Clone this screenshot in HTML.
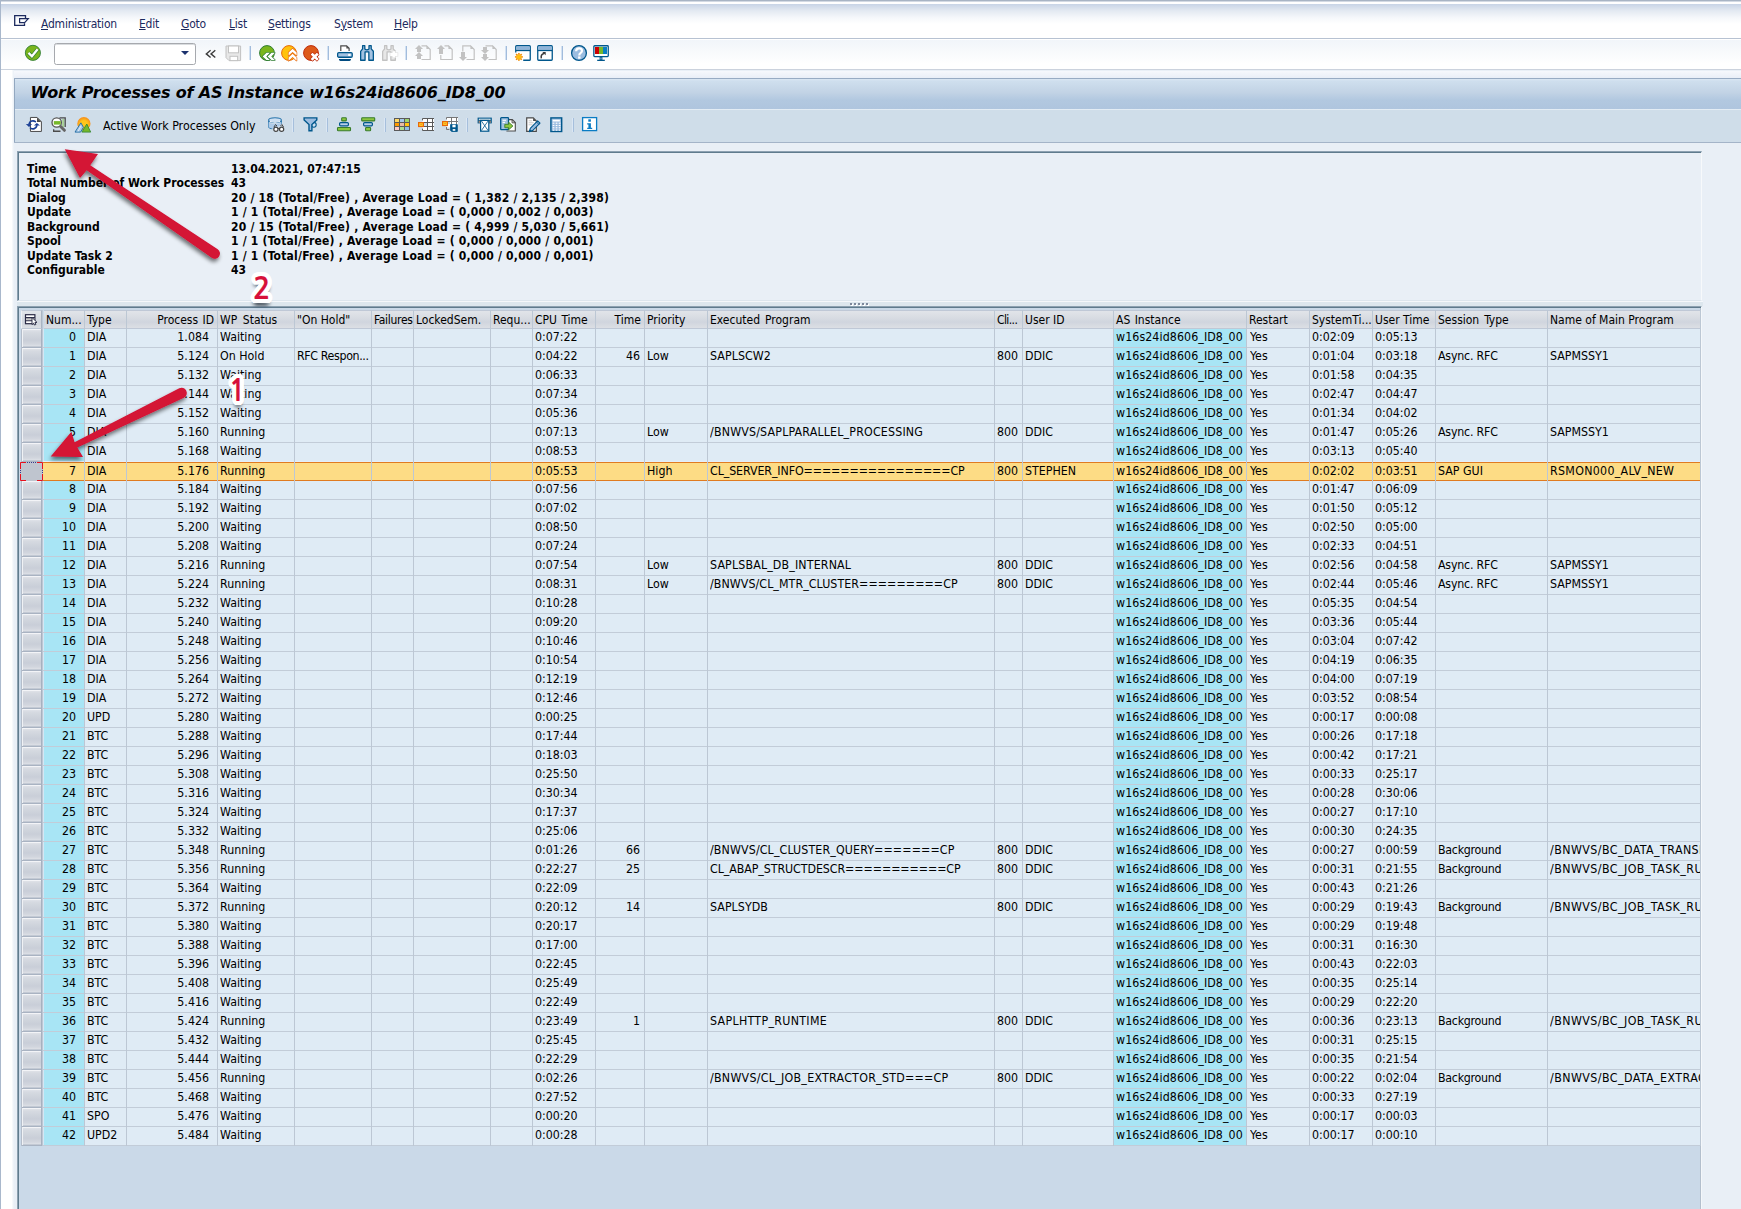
<!DOCTYPE html><html><head><meta charset="utf-8"><title>Work Processes of AS Instance w16s24id8606_ID8_00</title><style>
*{box-sizing:border-box;margin:0;padding:0}
html,body{width:1741px;height:1209px;overflow:hidden;background:#e9eff6;font-family:"DejaVu Sans Condensed","DejaVu Sans","Liberation Sans",sans-serif;font-size:12px;font-stretch:condensed;color:#000}
.a{position:absolute}
.t{position:absolute;white-space:pre;line-height:19px;height:19px;overflow:hidden;margin-top:-1px;font-size:12.3px}
.r{text-align:right}
#menu span{position:absolute;top:17px;line-height:15px;color:#1c2a5e;white-space:pre;letter-spacing:-0.22px}
#menu u{text-decoration:underline;text-decoration-thickness:1px;text-underline-offset:0.6px}
.sep{position:absolute;width:2px;background:linear-gradient(90deg,#d3e2f3 0,#d3e2f3 1px,#a2bcdc 1px,#a2bcdc 2px)}
.ic{position:absolute;overflow:visible}
.h{position:absolute;top:310px;height:19px;border-top:1px solid #bfc8d6;border-bottom:1px solid #bfc8d6;background:linear-gradient(#e1e4e9 0%,#d9dde3 35%,#d0d5de 65%,#dcdfe4 100%);line-height:17px;white-space:pre;overflow:hidden;padding:1px 3px 0 2px}
.vl{position:absolute;top:310px;width:1px;height:836px;background:#bcc7d4}
.ib{position:absolute;left:27px;font-weight:bold;line-height:15px;white-space:pre}
.iv{position:absolute;left:231px;font-weight:bold;line-height:15px;white-space:pre;letter-spacing:0.21px}
.dg{position:absolute;font-family:'NanumGothic','IPAGothic','Liberation Sans',sans-serif;font-weight:bold;font-stretch:normal;font-size:29px;-webkit-text-stroke:0.15px #d7103a;line-height:40px;height:40px;color:#d7103a;white-space:pre;text-shadow:4.10px 0.00px 0 #fff,3.96px 1.06px 0 #fff,3.55px 2.05px 0 #fff,2.90px 2.90px 0 #fff,2.05px 3.55px 0 #fff,1.06px 3.96px 0 #fff,0.00px 4.10px 0 #fff,-1.06px 3.96px 0 #fff,-2.05px 3.55px 0 #fff,-2.90px 2.90px 0 #fff,-3.55px 2.05px 0 #fff,-3.96px 1.06px 0 #fff,-4.10px 0.00px 0 #fff,-3.96px -1.06px 0 #fff,-3.55px -2.05px 0 #fff,-2.90px -2.90px 0 #fff,-2.05px -3.55px 0 #fff,-1.06px -3.96px 0 #fff,-0.00px -4.10px 0 #fff,1.06px -3.96px 0 #fff,2.05px -3.55px 0 #fff,2.90px -2.90px 0 #fff,3.55px -2.05px 0 #fff,3.96px -1.06px 0 #fff,3.00px 0.00px 0 #fff,2.77px 1.15px 0 #fff,2.12px 2.12px 0 #fff,1.15px 2.77px 0 #fff,0.00px 3.00px 0 #fff,-1.15px 2.77px 0 #fff,-2.12px 2.12px 0 #fff,-2.77px 1.15px 0 #fff,-3.00px 0.00px 0 #fff,-2.77px -1.15px 0 #fff,-2.12px -2.12px 0 #fff,-1.15px -2.77px 0 #fff,-0.00px -3.00px 0 #fff,1.15px -2.77px 0 #fff,2.12px -2.12px 0 #fff,2.77px -1.15px 0 #fff,1.80px 0.00px 0 #fff,1.46px 1.06px 0 #fff,0.56px 1.71px 0 #fff,-0.56px 1.71px 0 #fff,-1.46px 1.06px 0 #fff,-1.80px 0.00px 0 #fff,-1.46px -1.06px 0 #fff,-0.56px -1.71px 0 #fff,0.56px -1.71px 0 #fff,1.46px -1.06px 0 #fff,0 7px 3px rgba(40,50,60,.5),-2.5px 6px 3px rgba(40,50,60,.4),2.5px 6px 3px rgba(40,50,60,.4)}
</style></head><body>
<div class="a" style="left:0;top:0;width:1741px;height:70px;background:#fff"></div>
<div class="a" style="left:0;top:0;width:1741px;height:1px;background:#a8b4c4"></div>
<div class="a" style="left:0;top:1px;width:1741px;height:1px;background:#d3dae4"></div>
<div class="a" style="left:0;top:4px;width:1741px;height:20px;background:linear-gradient(#c8d4e6,#e4eaf2 35%,#f6f8fb 70%,#fff)"></div>
<div class="a" style="left:0;top:38px;width:1741px;height:1px;background:#b7c2d2"></div>
<div class="a" style="left:0;top:40px;width:1741px;height:24px;background:linear-gradient(#f1f5fa,#f8fafc 50%,#fff)"></div>
<div class="a" style="left:0;top:69px;width:1741px;height:1px;background:#cbd2dd"></div>
<div class="a" style="left:0;top:71px;width:1741px;height:7px;background:linear-gradient(#f6f8fc,#e9eef7)"></div>
<div class="a" style="left:0;top:70px;width:14px;height:1139px;background:linear-gradient(90deg,#fff 0,#fff 11.5px,#e9eff6 14px)"></div>
<div class="a" style="left:0;top:0;width:1px;height:1209px;background:#a9b8cc"></div>
<div id="menu">
<svg class="ic" style="left:13px;top:14px" width="18" height="14" viewBox="0 0 18 14" ><path d="M12.5 4V1.7H1.7V11.3H11.5V9.3" fill="none" stroke="#1c2a5e" stroke-width="1.3"/><path d="M6.6 4.6H15.3L11.6 8.6H6.6Z" fill="none" stroke="#1c2a5e" stroke-width="1.2" stroke-linejoin="miter"/></svg>
<span style="left:41px"><u>A</u>dministration</span>
<span style="left:139px"><u>E</u>dit</span>
<span style="left:181px"><u>G</u>oto</span>
<span style="left:229px"><u>L</u>ist</span>
<span style="left:268px"><u>S</u>ettings</span>
<span style="left:334px">S<u>y</u>stem</span>
<span style="left:394px"><u>H</u>elp</span>
</div>
<div class="a" style="left:54px;top:43px;width:142px;height:22px;background:#fff;border:1px solid #a6a9ae;border-radius:2.5px;box-shadow:inset 0 1px 0 #d9dcdf"></div>
<div class="a" style="left:180.5px;top:51.3px;width:0;height:0;border-left:4.3px solid transparent;border-right:4.3px solid transparent;border-top:4.6px solid #1c326e"></div>
<svg class="ic" style="left:24px;top:44px" width="18" height="18" viewBox="0 0 18 18" ><circle cx="8.9" cy="8.85" r="7.55" fill="#7ab51d" stroke="#2f7d32" stroke-width="0.9"/><path d="M4.5 8.9L7.9 12.3L13.6 5.3" fill="none" stroke="#2f7d32" stroke-width="3.7" stroke-linejoin="miter"/><path d="M4.5 8.9L7.9 12.3L13.6 5.3" fill="none" stroke="#fff" stroke-width="2.3" stroke-linejoin="miter"/></svg><svg class="ic" style="left:205px;top:49px" width="12" height="10" viewBox="0 0 12 10" ><path d="M5.6 1.3L1.3 4.9L5.6 8.5M10.3 1.3L6 4.9L10.3 8.5" fill="none" stroke="#3c3c3c" stroke-width="1.4"/></svg><svg class="ic" style="left:224.5px;top:44.5px" width="17" height="17" viewBox="0 0 17 17" ><path d="M1 1H15.6V15.6H4L1 12.6Z" fill="#e7e7e7" stroke="#c2c2c2" stroke-width="1"/><rect x="3.5" y="1" width="10" height="6.8" fill="#fff" stroke="#c2c2c2"/><rect x="5" y="11.3" width="7.6" height="4.3" fill="#fff" stroke="#c2c2c2"/></svg><svg class="ic" style="left:258px;top:44px" width="18" height="18" viewBox="0 0 18 18" ><circle cx="9" cy="9" r="7.4" fill="#7ab51d" stroke="#2f7d32" stroke-width="1"/><g fill="#fff" stroke="#2f7d32" stroke-width="1.3" paint-order="stroke" stroke-linejoin="round"><path d="M4.6 12.4L8.5 8.8H11.9L8.3 12.4L11.9 16H8.5Z"/><path d="M9.6 12.4L13.5 8.8H16.9L13.3 12.4L16.9 16H13.5Z"/></g></svg><svg class="ic" style="left:280px;top:44px" width="18" height="18" viewBox="0 0 18 18" ><circle cx="9" cy="9" r="7.4" fill="#ffc20e" stroke="#e8690b" stroke-width="1"/><g fill="#fff" stroke="#e8690b" stroke-width="1.3" paint-order="stroke" stroke-linejoin="round"><path d="M12.6 4.7L16.6 8.5V11.6L12.6 8L8.6 11.6V8.5Z"/><path d="M12.6 9.8L16.6 13.6V16.7L12.6 13.1L8.6 16.7V13.6Z"/></g></svg><svg class="ic" style="left:302px;top:44px" width="18" height="18" viewBox="0 0 18 18" ><circle cx="9" cy="9" r="7.4" fill="#dd5a1a" stroke="#c02d0c" stroke-width="1"/><g transform="translate(12.7 12.7) rotate(45)"><path d="M-1.3 -4.4H1.3V-1.3H4.4V1.3H1.3V4.4H-1.3V1.3H-4.4V-1.3H-1.3Z" fill="#fff" stroke="#c02d0c" stroke-width="1.3" paint-order="stroke" stroke-linejoin="round"/></g></svg><svg class="ic" style="left:336px;top:44px" width="18" height="18" viewBox="0 0 18 18" ><path d="M4.8 7V1.8H10.6L13.1 4.3V7" fill="#fff" stroke="#4b4b4b" stroke-width="1.2"/><path d="M10.4 1.8V4.5H13.1Z" fill="#4b4b4b"/><rect x="1.65" y="8.65" width="14.6" height="4.6" rx="1.2" fill="#a3c2e1" stroke="#00578c" stroke-width="1.3"/><rect x="12.2" y="9.9" width="2.3" height="2.1" fill="#fff"/><path d="M3 15.1H14.9V15.6Q14.9 16.9 13.5 16.9H4.4Q3 16.9 3 15.6Z" fill="#004a80"/></svg><svg class="ic" style="left:359px;top:44px" width="16" height="18" viewBox="0 0 16 18" ><path d="M3.6 1.65H5.8V5Q7.9 6.6 10 5V1.65H12.2V4.9L14.35 7.3V16.25H9.85V7.9H6.05V16.25H1.65V7.3L3.6 4.9Z" fill="#a3c2e1" stroke="#00578c" stroke-width="1.3" stroke-linejoin="round"/></svg><svg class="ic" style="left:381px;top:44px" width="16" height="18" viewBox="0 0 16 18" ><path d="M3.6 1.65H5.8V5Q7.9 6.6 10 5V1.65H12.2V4.9L14.35 7.3V16.25H9.85V7.9H6.05V16.25H1.65V7.3L3.6 4.9Z" fill="#e7e7e7" stroke="#c2c2c2" stroke-width="1.3" stroke-linejoin="round"/></svg><svg class="ic" style="left:388.5px;top:50px" width="10" height="10" viewBox="0 0 10 10" ><path d="M3.5 1.3H6.3V3.1H8.6V5.9H6.3V7.4H3.5V5.9H1.3V3.1H3.5Z" fill="#fff" stroke="#dcdcdc" stroke-width="1.2" paint-order="stroke"/></svg><svg class="ic" style="left:414px;top:44px" width="18" height="18" viewBox="0 0 18 18" ><path d="M7.5 1.8H12.5L16.2 5.5V15.5H7.5" fill="none" stroke="#c2c2c2" stroke-width="1.2"/><path d="M12.4 1.2V5H16.2Z" fill="#c2c2c2"/><path d="M5 1L9 5H7V8H3V5H1Z" fill="#c2c2c2"/><path d="M5 8L9 12H7V15H3V12H1Z" fill="#c2c2c2"/></svg><svg class="ic" style="left:436px;top:44px" width="18" height="18" viewBox="0 0 18 18" ><path d="M8.5 1.8H12.5L16.2 5.5V15.5H4.8V11" fill="none" stroke="#c2c2c2" stroke-width="1.2"/><path d="M12.4 1.2V5H16.2Z" fill="#c2c2c2"/><path d="M5 1L9 5H7V8H3V5H1Z" fill="#c2c2c2"/><rect x="3" y="6" width="4" height="4" fill="#c2c2c2"/></svg><svg class="ic" style="left:458px;top:44px" width="18" height="18" viewBox="0 0 18 18" ><path d="M4.8 7.5V1.8H12.5L16.2 5.5V15.5H8.5" fill="none" stroke="#c2c2c2" stroke-width="1.2"/><path d="M12.4 1.2V5H16.2Z" fill="#c2c2c2"/><path d="M5 17L9 13H7V10H3V13H1Z" fill="#c2c2c2"/><rect x="3" y="8" width="4" height="4" fill="#c2c2c2"/></svg><svg class="ic" style="left:480px;top:44px" width="18" height="18" viewBox="0 0 18 18" ><path d="M5.5 1.8H12.5L16.2 5.5V15.5H8.5" fill="none" stroke="#c2c2c2" stroke-width="1.2"/><path d="M12.4 1.2V5H16.2Z" fill="#c2c2c2"/><path d="M5 10L9 6H7V3H3V6H1Z" fill="#c2c2c2"/><path d="M5 17L9 13H7V10H3V13H1Z" fill="#c2c2c2"/></svg><svg class="ic" style="left:514px;top:44px" width="18" height="18" viewBox="0 0 18 18" ><path d="M1.75 8.6V2.6Q1.75 1.75 2.6 1.75H15.4Q16.25 1.75 16.25 2.6V15.4Q16.25 16.25 15.4 16.25H9.2" fill="#fff" stroke="#00578c" stroke-width="1.3"/><rect x="2.4" y="2.4" width="13.2" height="3.4" fill="#8fb4d9"/><path d="M1.75 6.5H16.25" stroke="#00578c" stroke-width="1.3"/><g transform="translate(4.9,12.9)"><rect x="-0.75" y="-3.95" width="1.5" height="1.7" fill="#f28a00" transform="rotate(0)"/><rect x="-0.75" y="-3.95" width="1.5" height="1.7" fill="#f28a00" transform="rotate(45)"/><rect x="-0.75" y="-3.95" width="1.5" height="1.7" fill="#f28a00" transform="rotate(90)"/><rect x="-0.75" y="-3.95" width="1.5" height="1.7" fill="#f28a00" transform="rotate(135)"/><rect x="-0.75" y="-3.95" width="1.5" height="1.7" fill="#f28a00" transform="rotate(180)"/><rect x="-0.75" y="-3.95" width="1.5" height="1.7" fill="#f28a00" transform="rotate(225)"/><rect x="-0.75" y="-3.95" width="1.5" height="1.7" fill="#f28a00" transform="rotate(270)"/><rect x="-0.75" y="-3.95" width="1.5" height="1.7" fill="#f28a00" transform="rotate(315)"/><circle r="2.5" fill="#ffc20e" stroke="#f9a11b" stroke-width="0.6"/></g></svg><svg class="ic" style="left:536px;top:44px" width="18" height="18" viewBox="0 0 18 18" ><rect x="1.75" y="1.75" width="14.5" height="14.5" rx="0.9" fill="#fff" stroke="#00578c" stroke-width="1.3"/><rect x="2.4" y="2.4" width="13.2" height="3.4" fill="#8fb4d9"/><path d="M1.75 6.5H16.25" stroke="#00578c" stroke-width="1.3"/><path d="M5.3 14.3Q4.5 10.4 8 9.6" fill="none" stroke="#3a3a3a" stroke-width="1.5"/><path d="M6.3 7.9H9.7V11.3Z" fill="#3a3a3a"/></svg><svg class="ic" style="left:570px;top:44px" width="18" height="18" viewBox="0 0 18 18" ><circle cx="9" cy="9" r="7.4" fill="#9bbde0" stroke="#00578c" stroke-width="1.3"/><path d="M6.1 7.2Q6.2 4.4 9.1 4.4Q12 4.4 12 6.8Q12 8.2 10.5 9.1Q9.3 9.8 9.3 11.4" fill="none" stroke="#fff" stroke-width="2.2"/><rect x="8.1" y="12.4" width="2.4" height="2.3" fill="#fff"/></svg><svg class="ic" style="left:592px;top:44px" width="18" height="18" viewBox="0 0 18 18" ><rect x="1.85" y="1.75" width="14.4" height="10.8" rx="0.8" fill="#fff" stroke="#00578c" stroke-width="1.3"/><rect x="3" y="3" width="4" height="7" fill="#cc0000"/><rect x="7" y="3" width="4" height="7" fill="#76b82a"/><rect x="11" y="3" width="4" height="7" fill="#0a7fc2"/><rect x="8" y="13.2" width="2" height="2.8" fill="#8fb4d9" stroke="#00578c" stroke-width="0.8"/><rect x="5.2" y="15.7" width="7.6" height="1.3" fill="#00578c"/></svg>
<div class="sep" style="left:249px;top:46px;height:14px"></div>
<div class="sep" style="left:327px;top:46px;height:14px"></div>
<div class="sep" style="left:405px;top:46px;height:14px"></div>
<div class="sep" style="left:505px;top:46px;height:14px"></div>
<div class="sep" style="left:561px;top:46px;height:14px"></div>
<div class="a" style="left:14px;top:78px;width:1727px;height:65px;background:#cfdde9;border-left:1px solid #93a8c0"></div>
<div class="a" style="left:14px;top:78px;width:1727px;height:1px;background:#98abc3"></div>
<div class="a" style="left:15px;top:79px;width:1726px;height:30px;background:linear-gradient(#dbe7f3 0,#cfdfee 2px,#c2d3e5 45%,#b2c8e0 70%,#afc5de 100%)"></div>
<div class="a" style="left:15px;top:109px;width:1726px;height:1px;background:#e3ecf4"></div>
<div class="a" style="left:14px;top:142px;width:1727px;height:1px;background:#a4b4c8"></div>
<div class="a" style="left:30.5px;top:82px;font-family:'DejaVu Sans','Liberation Sans',sans-serif;font-weight:bold;font-style:italic;font-stretch:normal;font-size:16px;line-height:22px;letter-spacing:-0.14px;white-space:pre">Work Processes of AS Instance w16s24id8606_ID8_00</div>
<svg class="ic" style="left:25px;top:116px" width="18" height="18" viewBox="0 0 18 18" ><path d="M5.45 1.45H12.1L16.4 5.75V15.45H5.45Z" fill="#fff" stroke="#4b4b4b" stroke-width="1"/><path d="M12 1.6V5.9H16.3Z" fill="#4b4b4b"/><g stroke-linecap="round"><path d="M10.4 5.6A4 4 0 0 0 4.1 7.9" fill="none" stroke="#1a3f95" stroke-width="1.7"/><path d="M0.8 8.1L7.1 8.3L4 11Z" fill="#1a3f95" stroke="none"/><path d="M5.5 12.1A4 4 0 0 0 11.8 9.8" fill="none" stroke="#1a3f95" stroke-width="1.7"/><path d="M8.9 9.6H15L11.9 7Z" fill="#1a3f95" stroke="none"/></g></svg><svg class="ic" style="left:50px;top:116px" width="18" height="18" viewBox="0 0 18 18" ><path d="M9.5 1.85H15.2V11M10.5 15.25H3.65V13.3" fill="none" stroke="#4b4b4b" stroke-width="1.3"/><rect x="12.2" y="3.5" width="2" height="1" fill="#7fc241"/><rect x="12.2" y="5.5" width="2" height="1" fill="#7fc241"/><rect x="12.2" y="7.5" width="2" height="1" fill="#7fc241"/><rect x="12.2" y="9.5" width="2" height="1" fill="#7fc241"/><circle cx="6.7" cy="6.5" r="4.7" fill="#fff" stroke="#555" stroke-width="1.3"/><rect x="3.8" y="5.1" width="6.9" height="3.5" fill="#76b82a"/><path d="M10.6 10.5L14.4 14.3" stroke="#666" stroke-width="3" stroke-linecap="round"/></svg><svg class="ic" style="left:73.5px;top:116px" width="18" height="18" viewBox="0 0 18 18" ><defs><radialGradient id="sun" cx="50%" cy="55%" r="50%"><stop offset="0.55" stop-color="#ffc61a"/><stop offset="1" stop-color="#f7941d"/></radialGradient></defs><circle cx="9.9" cy="7.7" r="6.6" fill="url(#sun)"/><path d="M1 16.1L6.9 6.8L9.4 11.3L6.6 16.1Z" fill="#a9c9e6" stroke="#1c6aa3" stroke-width="0.9"/><path d="M4 15.4L7 10" stroke="#e4eef8" stroke-width="0.9"/><path d="M7.9 16.1L12.8 8L16.7 16.1Z" fill="#76b82a" stroke="#3a8a34" stroke-width="0.9"/></svg><svg class="ic" style="left:267px;top:116px" width="18" height="18" viewBox="0 0 18 18" ><path d="M1.6 4.5V10.5Q1.6 12.2 5.5 12.8" fill="none" stroke="#2b76ad" stroke-width="1.1"/><path d="M14.4 4.5V8" fill="none" stroke="#2b76ad" stroke-width="1.1"/><path d="M1.6 6V10.5Q1.6 12 6 12.8L14.4 9V6Q14 7.8 8 7.8Q2 7.8 1.6 6Z" fill="#aecbe8"/><ellipse cx="8" cy="4.1" rx="6.4" ry="2.4" fill="#cddff1" stroke="#2b76ad" stroke-width="1.1"/><path d="M3 5.4Q8 7.4 13 5.4" fill="none" stroke="#e9f1f9" stroke-width="1"/><path d="M7 11L8.5 8.5L10 10M13.5 10L14.9 8.5L16.5 11" fill="none" stroke="#444" stroke-width="1"/><circle cx="8.9" cy="13.3" r="2.1" fill="#fff" stroke="#444" stroke-width="1.2"/><circle cx="14.6" cy="13.3" r="2.1" fill="#fff" stroke="#444" stroke-width="1.2"/><path d="M11 12.8Q11.75 12.2 12.5 12.8" fill="none" stroke="#444" stroke-width="1.1"/></svg><svg class="ic" style="left:301.5px;top:116px" width="18" height="18" viewBox="0 0 18 18" ><circle cx="11.8" cy="8.8" r="2.4" fill="#cfe0f1" stroke="#00578c" stroke-width="1.1"/><path d="M2.1 1.9H14.8V4L9.9 8.6V14.7H7V8.6L2.1 4Z" fill="#9cbde0" stroke="#00578c" stroke-width="1.4" stroke-linejoin="miter"/></svg><svg class="ic" style="left:336px;top:116px" width="18" height="18" viewBox="0 0 18 18" ><rect x="5.7" y="1.7" width="4.6" height="3.2" rx="0.7" fill="#8dc63f" stroke="#3a7d2c" stroke-width="1.1"/><rect x="3.6" y="6.6" width="8.8" height="3.2" rx="1" fill="#b8cfe8" stroke="#00578c" stroke-width="1.2"/><rect x="1.5" y="11.5" width="13" height="3.2" rx="0.7" fill="#8dc63f" stroke="#3a7d2c" stroke-width="1.1"/></svg><svg class="ic" style="left:360px;top:116px" width="18" height="18" viewBox="0 0 18 18" ><rect x="1.7" y="1.7" width="13" height="3.2" rx="0.7" fill="#8dc63f" stroke="#3a7d2c" stroke-width="1.1"/><rect x="3.6" y="6.6" width="8.8" height="3.2" rx="1" fill="#b8cfe8" stroke="#00578c" stroke-width="1.2"/><rect x="5.6" y="11.5" width="5" height="3.2" rx="0.7" fill="#8dc63f" stroke="#3a7d2c" stroke-width="1.1"/></svg><svg class="ic" style="left:394px;top:118px" width="16" height="13" viewBox="0 0 16 13" ><rect x="0" y="0" width="16" height="13" fill="#5a5a5a"/><rect x="1" y="1" width="4" height="3" fill="#ffd966"/><rect x="6" y="1" width="4" height="3" fill="#a3c8ec"/><rect x="11" y="1" width="4" height="3" fill="#9ed36a"/><rect x="1" y="5" width="4" height="3" fill="#ff9a00"/><rect x="6" y="5" width="4" height="3" fill="#e6bba8"/><rect x="11" y="5" width="4" height="3" fill="#ffc20e"/><rect x="1" y="9" width="4" height="3" fill="#ffcaca"/><rect x="6" y="9" width="4" height="3" fill="#a8dc90"/><rect x="11" y="9" width="4" height="3" fill="#8ebde8"/></svg><svg class="ic" style="left:417px;top:117px" width="18" height="16" viewBox="0 0 18 16" ><rect x="5.5" y="1.5" width="11.5" height="12" fill="#fff"/><path d="M5.5 3.4V1.5H17M5.5 5.5H17M5.5 9.5H17M5.5 11.6V13.5H17M10.5 1.5V13.5M15.5 1.5V13.5" fill="none" stroke="#5a5a5a" stroke-width="1"/><rect x="6" y="6" width="4" height="3" fill="#c9dcef"/><rect x="1.6" y="5.6" width="4.8" height="3.9" fill="#ffd42a" stroke="#e8690b" stroke-width="1.2"/><rect x="3.2" y="7.1" width="1.8" height="0.9" fill="#f7941d"/></svg><svg class="ic" style="left:441px;top:116px" width="18" height="18" viewBox="0 0 18 18" ><rect x="5.5" y="1.5" width="11.5" height="10" fill="#fff"/><path d="M5.5 3.4V1.5H17M5.5 5.5H17M5.5 11V13.5H8.4M10.5 1.5V8M15.5 1.5V8" fill="none" stroke="#777" stroke-width="1"/><rect x="6" y="6" width="3" height="2" fill="#c9dcef"/><rect x="1.6" y="5.6" width="4.8" height="3.9" fill="#ffd42a" stroke="#e8690b" stroke-width="1.2"/><rect x="3.2" y="7.1" width="1.8" height="0.9" fill="#f7941d"/><path d="M9.6 8.6H16.3V15.4H10.6L9.6 14.4Z" fill="#00578c" stroke="#00578c" stroke-width="0.9"/><rect x="11.4" y="8.7" width="3.2" height="2.6" fill="#fff"/><rect x="11.7" y="13.1" width="2.6" height="1.7" fill="#fff"/></svg><svg class="ic" style="left:476px;top:116px" width="18" height="18" viewBox="0 0 18 18" ><rect x="1.600" y="1.600" width="14.200" height="5.800" fill="#00578c"/><rect x="2.800" y="2.700" width="11.800" height="1.100" fill="#fff"/><rect x="2.600" y="4.600" width="1.500" height="2.300" fill="#a08878"/><rect x="13.300" y="4.600" width="1.500" height="2.300" fill="#a08878"/><rect x="4.600" y="4.400" width="8.200" height="10.800" fill="#fff" stroke="#00578c" stroke-width="1.200"/><path d="M5.300 4.800L12.200 14.700M12.200 4.800L5.300 14.700" stroke="#00578c" stroke-width="0.800" fill="none"/></svg><svg class="ic" style="left:499.5px;top:116px" width="18" height="18" viewBox="0 0 18 18" ><path d="M7.500 3.600H12.300L15.300 6.600V15H6.400" fill="#fff" stroke="#4b4b4b" stroke-width="1.100"/><path d="M12.100 3.600V6.800H15.300" fill="none" stroke="#4b4b4b" stroke-width="1"/><rect x="0.700" y="1.700" width="7.800" height="12" rx="0.800" fill="#a3c2e1" stroke="#00578c" stroke-width="1.300"/><path d="M2.600 4.300H6M2.600 6.400H5" stroke="#fff" stroke-width="1"/><path d="M4.800 8.300H8.600V6.200L12.900 10L8.600 13.800V11.700H4.800Z" fill="#8dc63f" stroke="#3a7d2c" stroke-width="0.900"/></svg><svg class="ic" style="left:525px;top:116px" width="18" height="18" viewBox="0 0 18 18" ><path d="M1.700 1.900H8.300L11.300 4.900V15.400H1.700Z" fill="#fff" stroke="#4b4b4b" stroke-width="1.200"/><path d="M8.100 1.900V5.100H11.300Z" fill="#4b4b4b"/><path d="M3.600 4.800H7.200M3.600 6.800H8.600M3.600 8.800H7.600" stroke="#c9c9c9" stroke-width="1"/><path d="M4.300 15.600L5.300 12.300L12.600 4.800L15 7.200L7.600 14.600Z" fill="#9cbde0" stroke="#00578c" stroke-width="1.100" stroke-linejoin="round"/><path d="M4.300 15.600L5 13.300L6.600 14.900Z" fill="#00578c"/><path d="M11.500 6L13.900 8.400" stroke="#00578c" stroke-width="0.900"/></svg><svg class="ic" style="left:549.5px;top:116px" width="14" height="18" viewBox="0 0 14 18" ><rect x="0.900" y="1.900" width="10.800" height="13.600" fill="#9cbde0" stroke="#00578c" stroke-width="1.400"/><rect x="2.700" y="3.700" width="7.200" height="1.800" fill="#fff"/><rect x="2.7" y="6.6" width="1.700" height="1.200" fill="#fff"/><rect x="5.7" y="6.6" width="1.700" height="1.200" fill="#fff"/><rect x="8.7" y="6.6" width="1.700" height="1.200" fill="#fff"/><rect x="2.7" y="8.899999999999999" width="1.700" height="1.200" fill="#fff"/><rect x="5.7" y="8.899999999999999" width="1.700" height="1.200" fill="#fff"/><rect x="8.7" y="8.899999999999999" width="1.700" height="1.200" fill="#fff"/><rect x="2.7" y="11.2" width="1.700" height="1.200" fill="#fff"/><rect x="5.7" y="11.2" width="1.700" height="1.200" fill="#fff"/><rect x="8.7" y="11.2" width="1.700" height="1.200" fill="#fff"/><rect x="2.7" y="13.5" width="1.700" height="1.200" fill="#fff"/><rect x="5.7" y="13.5" width="1.700" height="1.200" fill="#fff"/><rect x="8.7" y="13.5" width="1.700" height="1.200" fill="#fff"/></svg><svg class="ic" style="left:580.5px;top:116px" width="18" height="18" viewBox="0 0 18 18" ><rect x="1.600" y="1.600" width="14" height="13" fill="#fff" stroke="#0a7cc4" stroke-width="1.300"/><rect x="7.300" y="3.300" width="2.600" height="2.400" fill="#0a7cc4"/><path d="M6.200 7.200H9.900V11.700H11.200V13H6.200V11.700H7.400V8.500H6.200Z" fill="#0a7cc4"/></svg>
<div class="t" style="left:103px;top:118px">Active Work Processes Only</div>
<div class="sep" style="left:292px;top:118px;height:14px;background:linear-gradient(90deg,#dbe7f4 0,#dbe7f4 1px,#a6bfdc 1px,#a6bfdc 2px)"></div>
<div class="sep" style="left:326px;top:118px;height:14px;background:linear-gradient(90deg,#dbe7f4 0,#dbe7f4 1px,#a6bfdc 1px,#a6bfdc 2px)"></div>
<div class="sep" style="left:384px;top:118px;height:14px;background:linear-gradient(90deg,#dbe7f4 0,#dbe7f4 1px,#a6bfdc 1px,#a6bfdc 2px)"></div>
<div class="sep" style="left:466px;top:118px;height:14px;background:linear-gradient(90deg,#dbe7f4 0,#dbe7f4 1px,#a6bfdc 1px,#a6bfdc 2px)"></div>
<div class="sep" style="left:572px;top:118px;height:14px;background:linear-gradient(90deg,#dbe7f4 0,#dbe7f4 1px,#a6bfdc 1px,#a6bfdc 2px)"></div>
<div class="a" style="left:17px;top:151px;width:1685px;height:150px;background:#e9eff6;border-top:2px solid #8da1b1;border-left:2px solid #8da1b1;border-right:1px solid #f7f9fb;border-bottom:1px solid #dde6ee"></div>
<div class="a" style="left:18px;top:152px;width:1683px;height:1px;background:#5f7b8d"></div>
<div class="a" style="left:18px;top:152px;width:1px;height:148px;background:#607c8e"></div>
<div class="ib" style="top:162px">Time</div><div class="iv" style="top:162px;letter-spacing:0">13.04.2021, 07:47:15</div>
<div class="ib" style="top:176px">Total Number of Work Processes</div><div class="iv" style="top:176px;letter-spacing:0">43</div>
<div class="ib" style="top:191px">Dialog</div><div class="iv" style="top:191px">20 / 18 (Total/Free) , Average Load = ( 1,382 / 2,135 / 2,398)</div>
<div class="ib" style="top:205px">Update</div><div class="iv" style="top:205px">1 / 1 (Total/Free) , Average Load = ( 0,000 / 0,002 / 0,003)</div>
<div class="ib" style="top:220px">Background</div><div class="iv" style="top:220px">20 / 15 (Total/Free) , Average Load = ( 4,999 / 5,030 / 5,661)</div>
<div class="ib" style="top:234px">Spool</div><div class="iv" style="top:234px">1 / 1 (Total/Free) , Average Load = ( 0,000 / 0,000 / 0,001)</div>
<div class="ib" style="top:249px">Update Task 2</div><div class="iv" style="top:249px">1 / 1 (Total/Free) , Average Load = ( 0,000 / 0,000 / 0,001)</div>
<div class="ib" style="top:263px">Configurable</div><div class="iv" style="top:263px;letter-spacing:0">43</div>
<div class="a" style="left:17px;top:301px;width:1686px;height:5px;background:#dde7ee;border-top:1px solid #f5f8fb"></div>
<div class="a" style="left:851px;top:304px;width:2px;height:2px;background:#fff"></div><div class="a" style="left:850px;top:303px;width:2px;height:2px;background:#7d889b"></div>
<div class="a" style="left:855px;top:304px;width:2px;height:2px;background:#fff"></div><div class="a" style="left:854px;top:303px;width:2px;height:2px;background:#7d889b"></div>
<div class="a" style="left:859px;top:304px;width:2px;height:2px;background:#fff"></div><div class="a" style="left:858px;top:303px;width:2px;height:2px;background:#7d889b"></div>
<div class="a" style="left:863px;top:304px;width:2px;height:2px;background:#fff"></div><div class="a" style="left:862px;top:303px;width:2px;height:2px;background:#7d889b"></div>
<div class="a" style="left:867px;top:304px;width:2px;height:2px;background:#fff"></div><div class="a" style="left:866px;top:303px;width:2px;height:2px;background:#7d889b"></div>
<div class="a" style="left:17px;top:306px;width:1685px;height:903px;background:#cad9e8;border-top:1px solid #8da1b1;border-left:1px solid #8da1b1;border-right:1px solid #f4f7fa"></div>
<div class="a" style="left:18px;top:307px;width:1683px;height:1px;background:#5f7b8d"></div>
<div class="a" style="left:18px;top:307px;width:1px;height:902px;background:#607c8e"></div>
<div class="a" style="left:1700px;top:308px;width:1px;height:901px;background:#b3bfcd"></div>
<div class="a" style="left:43px;top:329px;width:1657px;height:817px;background:#dfebf5"></div>
<div class="a" style="left:44px;top:329px;width:40px;height:817px;background:#a8e5f5"></div>
<div class="a" style="left:1114px;top:329px;width:132px;height:817px;background:#a8e5f5"></div>
<div class="a" style="left:21px;top:329px;width:21px;height:817px;background:repeating-linear-gradient(#f3f4f7 0,#f3f4f7 1px,#dfe2e8 1px,#d6dae1 3px,#cfd4dc 7px,#c9ced8 11px,#d2d6de 15px,#dde0e6 17px,#a9b3c2 18px,#a9b3c2 19px);border-left:1px solid #b4bdca;border-right:1px solid #a7b1c0"></div>
<div class="a" style="left:22px;top:329px;width:1px;height:817px;background:repeating-linear-gradient(#f0f2f5 0,#f0f2f5 18px,#a9b3c2 18px,#a9b3c2 19px)"></div>
<div class="a" style="left:43px;top:329px;width:1px;height:817px;background:#d6e6f3"></div>
<div class="a" style="left:43px;top:329px;width:1657px;height:817px;background:repeating-linear-gradient(transparent 0,transparent 18px,#c2ccd8 18px,#c2ccd8 19px)"></div>
<div class="a" style="left:43px;top:461px;width:1657px;height:1px;background:#e4eff8"></div>
<div class="a" style="left:43px;top:462px;width:1657px;height:19px;background:#fddc85;border-top:1px solid #e07b21;border-bottom:1px solid #e07b21"></div>
<div class="vl" style="left:42px"></div>
<div class="vl" style="left:84px"></div>
<div class="vl" style="left:126px"></div>
<div class="vl" style="left:217px"></div>
<div class="vl" style="left:294px"></div>
<div class="vl" style="left:371px"></div>
<div class="vl" style="left:413px"></div>
<div class="vl" style="left:490px"></div>
<div class="vl" style="left:532px"></div>
<div class="vl" style="left:595px"></div>
<div class="vl" style="left:644px"></div>
<div class="vl" style="left:707px"></div>
<div class="vl" style="left:994px"></div>
<div class="vl" style="left:1022px"></div>
<div class="vl" style="left:1113px"></div>
<div class="vl" style="left:1246px"></div>
<div class="vl" style="left:1309px"></div>
<div class="vl" style="left:1372px"></div>
<div class="vl" style="left:1435px"></div>
<div class="vl" style="left:1547px"></div>
<div class="vl" style="left:1700px"></div>
<div class="h" style="left:21px;width:21px;padding:0;border-left:1px solid #eef0f4;border-right:1px solid #a9b4c3"></div>
<svg class="ic" style="left:24px;top:313px" width="14" height="13" viewBox="0 0 14 13" ><rect x="1.500" y="1.700" width="9.400" height="9" fill="#fff" stroke="#2b2b45" stroke-width="1.200"/><rect x="2.100" y="5" width="8.200" height="2.300" fill="#c9c9c9"/><path d="M1.500 4.600H10.900M1.500 7.700H10.900" stroke="#2b2b45" stroke-width="1.100"/><path d="M8 4.5V11.6L9.6 10.2L10.6 12.1L11.9 11.4L10.9 9.6L13 9.4Z" fill="#fff" stroke="#26263f" stroke-width="0.9" stroke-linejoin="round"/></svg>
<div class="h r" style="left:44px;width:40px;padding-left:2px">Num...</div>
<div class="h" style="left:85px;width:41px">Type</div>
<div class="h r" style="left:127px;width:90px;word-spacing:1px">Process ID</div>
<div class="h" style="left:218px;width:76px;word-spacing:2.2px">WP Status</div>
<div class="h" style="left:295px;width:76px">&quot;On Hold&quot;</div>
<div class="h" style="left:372px;width:41px;padding-right:0;letter-spacing:-0.3px">Failures</div>
<div class="h" style="left:414px;width:76px">LockedSem.</div>
<div class="h" style="left:491px;width:41px">Requ...</div>
<div class="h" style="left:533px;width:62px;word-spacing:1px">CPU Time</div>
<div class="h r" style="left:596px;width:48px">Time</div>
<div class="h" style="left:645px;width:62px">Priority</div>
<div class="h" style="left:708px;width:286px;word-spacing:1.6px">Executed Program</div>
<div class="h" style="left:995px;width:27px;letter-spacing:-0.6px">Cli...</div>
<div class="h" style="left:1023px;width:90px">User ID</div>
<div class="h" style="left:1114px;width:132px;word-spacing:1px">AS Instance</div>
<div class="h" style="left:1247px;width:62px">Restart</div>
<div class="h" style="left:1310px;width:62px">SystemTi...</div>
<div class="h" style="left:1373px;width:62px">User Time</div>
<div class="h" style="left:1436px;width:111px;word-spacing:1.5px">Session Type</div>
<div class="h" style="left:1548px;width:152px">Name of Main Program</div>
<div class="t r" style="left:43px;top:329px;width:33px">0</div>
<div class="t" style="left:87px;top:329px;width:39px">DIA</div>
<div class="t r" style="left:127px;top:329px;width:82px">1.084</div>
<div class="t" style="left:220px;top:329px;width:74px">Waiting</div>
<div class="t" style="left:535px;top:329px;width:60px">0:07:22</div>
<div class="t" style="left:1116px;top:329px;width:130px;letter-spacing:0.09px">w16s24id8606_ID8_00</div>
<div class="t" style="left:1250px;top:329px;width:59px">Yes</div>
<div class="t" style="left:1312px;top:329px;width:60px">0:02:09</div>
<div class="t" style="left:1375px;top:329px;width:60px">0:05:13</div>
<div class="t r" style="left:43px;top:348px;width:33px">1</div>
<div class="t" style="left:87px;top:348px;width:39px">DIA</div>
<div class="t r" style="left:127px;top:348px;width:82px">5.124</div>
<div class="t" style="left:220px;top:348px;width:74px">On Hold</div>
<div class="t" style="left:297px;top:348px;width:74px;letter-spacing:-0.36px">RFC Respon...</div>
<div class="t" style="left:535px;top:348px;width:60px">0:04:22</div>
<div class="t r" style="left:596px;top:348px;width:44px">46</div>
<div class="t" style="left:647px;top:348px;width:60px">Low</div>
<div class="t" style="left:710px;top:348px;width:284px;letter-spacing:0.06px">SAPLSCW2</div>
<div class="t" style="left:997px;top:348px;width:25px">800</div>
<div class="t" style="left:1025px;top:348px;width:88px">DDIC</div>
<div class="t" style="left:1116px;top:348px;width:130px;letter-spacing:0.09px">w16s24id8606_ID8_00</div>
<div class="t" style="left:1250px;top:348px;width:59px">Yes</div>
<div class="t" style="left:1312px;top:348px;width:60px">0:01:04</div>
<div class="t" style="left:1375px;top:348px;width:60px">0:03:18</div>
<div class="t" style="left:1438px;top:348px;width:109px;letter-spacing:-0.2px">Async. RFC</div>
<div class="t" style="left:1550px;top:348px;width:150px">SAPMSSY1</div>
<div class="t r" style="left:43px;top:367px;width:33px">2</div>
<div class="t" style="left:87px;top:367px;width:39px">DIA</div>
<div class="t r" style="left:127px;top:367px;width:82px">5.132</div>
<div class="t" style="left:220px;top:367px;width:74px">Waiting</div>
<div class="t" style="left:535px;top:367px;width:60px">0:06:33</div>
<div class="t" style="left:1116px;top:367px;width:130px;letter-spacing:0.09px">w16s24id8606_ID8_00</div>
<div class="t" style="left:1250px;top:367px;width:59px">Yes</div>
<div class="t" style="left:1312px;top:367px;width:60px">0:01:58</div>
<div class="t" style="left:1375px;top:367px;width:60px">0:04:35</div>
<div class="t r" style="left:43px;top:386px;width:33px">3</div>
<div class="t" style="left:87px;top:386px;width:39px">DIA</div>
<div class="t r" style="left:127px;top:386px;width:82px">5.144</div>
<div class="t" style="left:220px;top:386px;width:74px">Waiting</div>
<div class="t" style="left:535px;top:386px;width:60px">0:07:34</div>
<div class="t" style="left:1116px;top:386px;width:130px;letter-spacing:0.09px">w16s24id8606_ID8_00</div>
<div class="t" style="left:1250px;top:386px;width:59px">Yes</div>
<div class="t" style="left:1312px;top:386px;width:60px">0:02:47</div>
<div class="t" style="left:1375px;top:386px;width:60px">0:04:47</div>
<div class="t r" style="left:43px;top:405px;width:33px">4</div>
<div class="t" style="left:87px;top:405px;width:39px">DIA</div>
<div class="t r" style="left:127px;top:405px;width:82px">5.152</div>
<div class="t" style="left:220px;top:405px;width:74px">Waiting</div>
<div class="t" style="left:535px;top:405px;width:60px">0:05:36</div>
<div class="t" style="left:1116px;top:405px;width:130px;letter-spacing:0.09px">w16s24id8606_ID8_00</div>
<div class="t" style="left:1250px;top:405px;width:59px">Yes</div>
<div class="t" style="left:1312px;top:405px;width:60px">0:01:34</div>
<div class="t" style="left:1375px;top:405px;width:60px">0:04:02</div>
<div class="t r" style="left:43px;top:424px;width:33px">5</div>
<div class="t" style="left:87px;top:424px;width:39px">DIA</div>
<div class="t r" style="left:127px;top:424px;width:82px">5.160</div>
<div class="t" style="left:220px;top:424px;width:74px">Running</div>
<div class="t" style="left:535px;top:424px;width:60px">0:07:13</div>
<div class="t" style="left:647px;top:424px;width:60px">Low</div>
<div class="t" style="left:710px;top:424px;width:284px;letter-spacing:0.18px">/BNWVS/SAPLPARALLEL_PROCESSING</div>
<div class="t" style="left:997px;top:424px;width:25px">800</div>
<div class="t" style="left:1025px;top:424px;width:88px">DDIC</div>
<div class="t" style="left:1116px;top:424px;width:130px;letter-spacing:0.09px">w16s24id8606_ID8_00</div>
<div class="t" style="left:1250px;top:424px;width:59px">Yes</div>
<div class="t" style="left:1312px;top:424px;width:60px">0:01:47</div>
<div class="t" style="left:1375px;top:424px;width:60px">0:05:26</div>
<div class="t" style="left:1438px;top:424px;width:109px;letter-spacing:-0.2px">Async. RFC</div>
<div class="t" style="left:1550px;top:424px;width:150px">SAPMSSY1</div>
<div class="t r" style="left:43px;top:443px;width:33px">6</div>
<div class="t" style="left:87px;top:443px;width:39px">DIA</div>
<div class="t r" style="left:127px;top:443px;width:82px">5.168</div>
<div class="t" style="left:220px;top:443px;width:74px">Waiting</div>
<div class="t" style="left:535px;top:443px;width:60px">0:08:53</div>
<div class="t" style="left:1116px;top:443px;width:130px;letter-spacing:0.09px">w16s24id8606_ID8_00</div>
<div class="t" style="left:1250px;top:443px;width:59px">Yes</div>
<div class="t" style="left:1312px;top:443px;width:60px">0:03:13</div>
<div class="t" style="left:1375px;top:443px;width:60px">0:05:40</div>
<div class="t r" style="left:43px;top:463px;width:33px">7</div>
<div class="t" style="left:87px;top:463px;width:39px">DIA</div>
<div class="t r" style="left:127px;top:463px;width:82px">5.176</div>
<div class="t" style="left:220px;top:463px;width:74px">Running</div>
<div class="t" style="left:535px;top:463px;width:60px">0:05:53</div>
<div class="t" style="left:647px;top:463px;width:60px">High</div>
<div class="t" style="left:710px;top:463px;width:284px;letter-spacing:-0.09px">CL_SERVER_INFO================CP</div>
<div class="t" style="left:997px;top:463px;width:25px">800</div>
<div class="t" style="left:1025px;top:463px;width:88px">STEPHEN</div>
<div class="t" style="left:1116px;top:463px;width:130px;letter-spacing:0.09px">w16s24id8606_ID8_00</div>
<div class="t" style="left:1250px;top:463px;width:59px">Yes</div>
<div class="t" style="left:1312px;top:463px;width:60px">0:02:02</div>
<div class="t" style="left:1375px;top:463px;width:60px">0:03:51</div>
<div class="t" style="left:1438px;top:463px;width:109px">SAP GUI</div>
<div class="t" style="left:1550px;top:463px;width:150px;letter-spacing:0.3px">RSMON000_ALV_NEW</div>
<div class="t r" style="left:43px;top:481px;width:33px">8</div>
<div class="t" style="left:87px;top:481px;width:39px">DIA</div>
<div class="t r" style="left:127px;top:481px;width:82px">5.184</div>
<div class="t" style="left:220px;top:481px;width:74px">Waiting</div>
<div class="t" style="left:535px;top:481px;width:60px">0:07:56</div>
<div class="t" style="left:1116px;top:481px;width:130px;letter-spacing:0.09px">w16s24id8606_ID8_00</div>
<div class="t" style="left:1250px;top:481px;width:59px">Yes</div>
<div class="t" style="left:1312px;top:481px;width:60px">0:01:47</div>
<div class="t" style="left:1375px;top:481px;width:60px">0:06:09</div>
<div class="t r" style="left:43px;top:500px;width:33px">9</div>
<div class="t" style="left:87px;top:500px;width:39px">DIA</div>
<div class="t r" style="left:127px;top:500px;width:82px">5.192</div>
<div class="t" style="left:220px;top:500px;width:74px">Waiting</div>
<div class="t" style="left:535px;top:500px;width:60px">0:07:02</div>
<div class="t" style="left:1116px;top:500px;width:130px;letter-spacing:0.09px">w16s24id8606_ID8_00</div>
<div class="t" style="left:1250px;top:500px;width:59px">Yes</div>
<div class="t" style="left:1312px;top:500px;width:60px">0:01:50</div>
<div class="t" style="left:1375px;top:500px;width:60px">0:05:12</div>
<div class="t r" style="left:43px;top:519px;width:33px">10</div>
<div class="t" style="left:87px;top:519px;width:39px">DIA</div>
<div class="t r" style="left:127px;top:519px;width:82px">5.200</div>
<div class="t" style="left:220px;top:519px;width:74px">Waiting</div>
<div class="t" style="left:535px;top:519px;width:60px">0:08:50</div>
<div class="t" style="left:1116px;top:519px;width:130px;letter-spacing:0.09px">w16s24id8606_ID8_00</div>
<div class="t" style="left:1250px;top:519px;width:59px">Yes</div>
<div class="t" style="left:1312px;top:519px;width:60px">0:02:50</div>
<div class="t" style="left:1375px;top:519px;width:60px">0:05:00</div>
<div class="t r" style="left:43px;top:538px;width:33px">11</div>
<div class="t" style="left:87px;top:538px;width:39px">DIA</div>
<div class="t r" style="left:127px;top:538px;width:82px">5.208</div>
<div class="t" style="left:220px;top:538px;width:74px">Waiting</div>
<div class="t" style="left:535px;top:538px;width:60px">0:07:24</div>
<div class="t" style="left:1116px;top:538px;width:130px;letter-spacing:0.09px">w16s24id8606_ID8_00</div>
<div class="t" style="left:1250px;top:538px;width:59px">Yes</div>
<div class="t" style="left:1312px;top:538px;width:60px">0:02:33</div>
<div class="t" style="left:1375px;top:538px;width:60px">0:04:51</div>
<div class="t r" style="left:43px;top:557px;width:33px">12</div>
<div class="t" style="left:87px;top:557px;width:39px">DIA</div>
<div class="t r" style="left:127px;top:557px;width:82px">5.216</div>
<div class="t" style="left:220px;top:557px;width:74px">Running</div>
<div class="t" style="left:535px;top:557px;width:60px">0:07:54</div>
<div class="t" style="left:647px;top:557px;width:60px">Low</div>
<div class="t" style="left:710px;top:557px;width:284px;letter-spacing:0.15px">SAPLSBAL_DB_INTERNAL</div>
<div class="t" style="left:997px;top:557px;width:25px">800</div>
<div class="t" style="left:1025px;top:557px;width:88px">DDIC</div>
<div class="t" style="left:1116px;top:557px;width:130px;letter-spacing:0.09px">w16s24id8606_ID8_00</div>
<div class="t" style="left:1250px;top:557px;width:59px">Yes</div>
<div class="t" style="left:1312px;top:557px;width:60px">0:02:56</div>
<div class="t" style="left:1375px;top:557px;width:60px">0:04:58</div>
<div class="t" style="left:1438px;top:557px;width:109px;letter-spacing:-0.2px">Async. RFC</div>
<div class="t" style="left:1550px;top:557px;width:150px">SAPMSSY1</div>
<div class="t r" style="left:43px;top:576px;width:33px">13</div>
<div class="t" style="left:87px;top:576px;width:39px">DIA</div>
<div class="t r" style="left:127px;top:576px;width:82px">5.224</div>
<div class="t" style="left:220px;top:576px;width:74px">Running</div>
<div class="t" style="left:535px;top:576px;width:60px">0:08:31</div>
<div class="t" style="left:647px;top:576px;width:60px">Low</div>
<div class="t" style="left:710px;top:576px;width:284px;letter-spacing:0.07px">/BNWVS/CL_MTR_CLUSTER=========CP</div>
<div class="t" style="left:997px;top:576px;width:25px">800</div>
<div class="t" style="left:1025px;top:576px;width:88px">DDIC</div>
<div class="t" style="left:1116px;top:576px;width:130px;letter-spacing:0.09px">w16s24id8606_ID8_00</div>
<div class="t" style="left:1250px;top:576px;width:59px">Yes</div>
<div class="t" style="left:1312px;top:576px;width:60px">0:02:44</div>
<div class="t" style="left:1375px;top:576px;width:60px">0:05:46</div>
<div class="t" style="left:1438px;top:576px;width:109px;letter-spacing:-0.2px">Async. RFC</div>
<div class="t" style="left:1550px;top:576px;width:150px">SAPMSSY1</div>
<div class="t r" style="left:43px;top:595px;width:33px">14</div>
<div class="t" style="left:87px;top:595px;width:39px">DIA</div>
<div class="t r" style="left:127px;top:595px;width:82px">5.232</div>
<div class="t" style="left:220px;top:595px;width:74px">Waiting</div>
<div class="t" style="left:535px;top:595px;width:60px">0:10:28</div>
<div class="t" style="left:1116px;top:595px;width:130px;letter-spacing:0.09px">w16s24id8606_ID8_00</div>
<div class="t" style="left:1250px;top:595px;width:59px">Yes</div>
<div class="t" style="left:1312px;top:595px;width:60px">0:05:35</div>
<div class="t" style="left:1375px;top:595px;width:60px">0:04:54</div>
<div class="t r" style="left:43px;top:614px;width:33px">15</div>
<div class="t" style="left:87px;top:614px;width:39px">DIA</div>
<div class="t r" style="left:127px;top:614px;width:82px">5.240</div>
<div class="t" style="left:220px;top:614px;width:74px">Waiting</div>
<div class="t" style="left:535px;top:614px;width:60px">0:09:20</div>
<div class="t" style="left:1116px;top:614px;width:130px;letter-spacing:0.09px">w16s24id8606_ID8_00</div>
<div class="t" style="left:1250px;top:614px;width:59px">Yes</div>
<div class="t" style="left:1312px;top:614px;width:60px">0:03:36</div>
<div class="t" style="left:1375px;top:614px;width:60px">0:05:44</div>
<div class="t r" style="left:43px;top:633px;width:33px">16</div>
<div class="t" style="left:87px;top:633px;width:39px">DIA</div>
<div class="t r" style="left:127px;top:633px;width:82px">5.248</div>
<div class="t" style="left:220px;top:633px;width:74px">Waiting</div>
<div class="t" style="left:535px;top:633px;width:60px">0:10:46</div>
<div class="t" style="left:1116px;top:633px;width:130px;letter-spacing:0.09px">w16s24id8606_ID8_00</div>
<div class="t" style="left:1250px;top:633px;width:59px">Yes</div>
<div class="t" style="left:1312px;top:633px;width:60px">0:03:04</div>
<div class="t" style="left:1375px;top:633px;width:60px">0:07:42</div>
<div class="t r" style="left:43px;top:652px;width:33px">17</div>
<div class="t" style="left:87px;top:652px;width:39px">DIA</div>
<div class="t r" style="left:127px;top:652px;width:82px">5.256</div>
<div class="t" style="left:220px;top:652px;width:74px">Waiting</div>
<div class="t" style="left:535px;top:652px;width:60px">0:10:54</div>
<div class="t" style="left:1116px;top:652px;width:130px;letter-spacing:0.09px">w16s24id8606_ID8_00</div>
<div class="t" style="left:1250px;top:652px;width:59px">Yes</div>
<div class="t" style="left:1312px;top:652px;width:60px">0:04:19</div>
<div class="t" style="left:1375px;top:652px;width:60px">0:06:35</div>
<div class="t r" style="left:43px;top:671px;width:33px">18</div>
<div class="t" style="left:87px;top:671px;width:39px">DIA</div>
<div class="t r" style="left:127px;top:671px;width:82px">5.264</div>
<div class="t" style="left:220px;top:671px;width:74px">Waiting</div>
<div class="t" style="left:535px;top:671px;width:60px">0:12:19</div>
<div class="t" style="left:1116px;top:671px;width:130px;letter-spacing:0.09px">w16s24id8606_ID8_00</div>
<div class="t" style="left:1250px;top:671px;width:59px">Yes</div>
<div class="t" style="left:1312px;top:671px;width:60px">0:04:00</div>
<div class="t" style="left:1375px;top:671px;width:60px">0:07:19</div>
<div class="t r" style="left:43px;top:690px;width:33px">19</div>
<div class="t" style="left:87px;top:690px;width:39px">DIA</div>
<div class="t r" style="left:127px;top:690px;width:82px">5.272</div>
<div class="t" style="left:220px;top:690px;width:74px">Waiting</div>
<div class="t" style="left:535px;top:690px;width:60px">0:12:46</div>
<div class="t" style="left:1116px;top:690px;width:130px;letter-spacing:0.09px">w16s24id8606_ID8_00</div>
<div class="t" style="left:1250px;top:690px;width:59px">Yes</div>
<div class="t" style="left:1312px;top:690px;width:60px">0:03:52</div>
<div class="t" style="left:1375px;top:690px;width:60px">0:08:54</div>
<div class="t r" style="left:43px;top:709px;width:33px">20</div>
<div class="t" style="left:87px;top:709px;width:39px">UPD</div>
<div class="t r" style="left:127px;top:709px;width:82px">5.280</div>
<div class="t" style="left:220px;top:709px;width:74px">Waiting</div>
<div class="t" style="left:535px;top:709px;width:60px">0:00:25</div>
<div class="t" style="left:1116px;top:709px;width:130px;letter-spacing:0.09px">w16s24id8606_ID8_00</div>
<div class="t" style="left:1250px;top:709px;width:59px">Yes</div>
<div class="t" style="left:1312px;top:709px;width:60px">0:00:17</div>
<div class="t" style="left:1375px;top:709px;width:60px">0:00:08</div>
<div class="t r" style="left:43px;top:728px;width:33px">21</div>
<div class="t" style="left:87px;top:728px;width:39px">BTC</div>
<div class="t r" style="left:127px;top:728px;width:82px">5.288</div>
<div class="t" style="left:220px;top:728px;width:74px">Waiting</div>
<div class="t" style="left:535px;top:728px;width:60px">0:17:44</div>
<div class="t" style="left:1116px;top:728px;width:130px;letter-spacing:0.09px">w16s24id8606_ID8_00</div>
<div class="t" style="left:1250px;top:728px;width:59px">Yes</div>
<div class="t" style="left:1312px;top:728px;width:60px">0:00:26</div>
<div class="t" style="left:1375px;top:728px;width:60px">0:17:18</div>
<div class="t r" style="left:43px;top:747px;width:33px">22</div>
<div class="t" style="left:87px;top:747px;width:39px">BTC</div>
<div class="t r" style="left:127px;top:747px;width:82px">5.296</div>
<div class="t" style="left:220px;top:747px;width:74px">Waiting</div>
<div class="t" style="left:535px;top:747px;width:60px">0:18:03</div>
<div class="t" style="left:1116px;top:747px;width:130px;letter-spacing:0.09px">w16s24id8606_ID8_00</div>
<div class="t" style="left:1250px;top:747px;width:59px">Yes</div>
<div class="t" style="left:1312px;top:747px;width:60px">0:00:42</div>
<div class="t" style="left:1375px;top:747px;width:60px">0:17:21</div>
<div class="t r" style="left:43px;top:766px;width:33px">23</div>
<div class="t" style="left:87px;top:766px;width:39px">BTC</div>
<div class="t r" style="left:127px;top:766px;width:82px">5.308</div>
<div class="t" style="left:220px;top:766px;width:74px">Waiting</div>
<div class="t" style="left:535px;top:766px;width:60px">0:25:50</div>
<div class="t" style="left:1116px;top:766px;width:130px;letter-spacing:0.09px">w16s24id8606_ID8_00</div>
<div class="t" style="left:1250px;top:766px;width:59px">Yes</div>
<div class="t" style="left:1312px;top:766px;width:60px">0:00:33</div>
<div class="t" style="left:1375px;top:766px;width:60px">0:25:17</div>
<div class="t r" style="left:43px;top:785px;width:33px">24</div>
<div class="t" style="left:87px;top:785px;width:39px">BTC</div>
<div class="t r" style="left:127px;top:785px;width:82px">5.316</div>
<div class="t" style="left:220px;top:785px;width:74px">Waiting</div>
<div class="t" style="left:535px;top:785px;width:60px">0:30:34</div>
<div class="t" style="left:1116px;top:785px;width:130px;letter-spacing:0.09px">w16s24id8606_ID8_00</div>
<div class="t" style="left:1250px;top:785px;width:59px">Yes</div>
<div class="t" style="left:1312px;top:785px;width:60px">0:00:28</div>
<div class="t" style="left:1375px;top:785px;width:60px">0:30:06</div>
<div class="t r" style="left:43px;top:804px;width:33px">25</div>
<div class="t" style="left:87px;top:804px;width:39px">BTC</div>
<div class="t r" style="left:127px;top:804px;width:82px">5.324</div>
<div class="t" style="left:220px;top:804px;width:74px">Waiting</div>
<div class="t" style="left:535px;top:804px;width:60px">0:17:37</div>
<div class="t" style="left:1116px;top:804px;width:130px;letter-spacing:0.09px">w16s24id8606_ID8_00</div>
<div class="t" style="left:1250px;top:804px;width:59px">Yes</div>
<div class="t" style="left:1312px;top:804px;width:60px">0:00:27</div>
<div class="t" style="left:1375px;top:804px;width:60px">0:17:10</div>
<div class="t r" style="left:43px;top:823px;width:33px">26</div>
<div class="t" style="left:87px;top:823px;width:39px">BTC</div>
<div class="t r" style="left:127px;top:823px;width:82px">5.332</div>
<div class="t" style="left:220px;top:823px;width:74px">Waiting</div>
<div class="t" style="left:535px;top:823px;width:60px">0:25:06</div>
<div class="t" style="left:1116px;top:823px;width:130px;letter-spacing:0.09px">w16s24id8606_ID8_00</div>
<div class="t" style="left:1250px;top:823px;width:59px">Yes</div>
<div class="t" style="left:1312px;top:823px;width:60px">0:00:30</div>
<div class="t" style="left:1375px;top:823px;width:60px">0:24:35</div>
<div class="t r" style="left:43px;top:842px;width:33px">27</div>
<div class="t" style="left:87px;top:842px;width:39px">BTC</div>
<div class="t r" style="left:127px;top:842px;width:82px">5.348</div>
<div class="t" style="left:220px;top:842px;width:74px">Running</div>
<div class="t" style="left:535px;top:842px;width:60px">0:01:26</div>
<div class="t r" style="left:596px;top:842px;width:44px">66</div>
<div class="t" style="left:710px;top:842px;width:284px;letter-spacing:0.13px">/BNWVS/CL_CLUSTER_QUERY=======CP</div>
<div class="t" style="left:997px;top:842px;width:25px">800</div>
<div class="t" style="left:1025px;top:842px;width:88px">DDIC</div>
<div class="t" style="left:1116px;top:842px;width:130px;letter-spacing:0.09px">w16s24id8606_ID8_00</div>
<div class="t" style="left:1250px;top:842px;width:59px">Yes</div>
<div class="t" style="left:1312px;top:842px;width:60px">0:00:27</div>
<div class="t" style="left:1375px;top:842px;width:60px">0:00:59</div>
<div class="t" style="left:1438px;top:842px;width:109px;letter-spacing:-0.27px">Background</div>
<div class="t" style="left:1550px;top:842px;width:150px;letter-spacing:0.45px">/BNWVS/BC_DATA_TRANSFER</div>
<div class="t r" style="left:43px;top:861px;width:33px">28</div>
<div class="t" style="left:87px;top:861px;width:39px">BTC</div>
<div class="t r" style="left:127px;top:861px;width:82px">5.356</div>
<div class="t" style="left:220px;top:861px;width:74px">Running</div>
<div class="t" style="left:535px;top:861px;width:60px">0:22:27</div>
<div class="t r" style="left:596px;top:861px;width:44px">25</div>
<div class="t" style="left:710px;top:861px;width:284px;letter-spacing:-0.065px">CL_ABAP_STRUCTDESCR===========CP</div>
<div class="t" style="left:997px;top:861px;width:25px">800</div>
<div class="t" style="left:1025px;top:861px;width:88px">DDIC</div>
<div class="t" style="left:1116px;top:861px;width:130px;letter-spacing:0.09px">w16s24id8606_ID8_00</div>
<div class="t" style="left:1250px;top:861px;width:59px">Yes</div>
<div class="t" style="left:1312px;top:861px;width:60px">0:00:31</div>
<div class="t" style="left:1375px;top:861px;width:60px">0:21:55</div>
<div class="t" style="left:1438px;top:861px;width:109px;letter-spacing:-0.27px">Background</div>
<div class="t" style="left:1550px;top:861px;width:150px;letter-spacing:0.45px">/BNWVS/BC_JOB_TASK_RUN</div>
<div class="t r" style="left:43px;top:880px;width:33px">29</div>
<div class="t" style="left:87px;top:880px;width:39px">BTC</div>
<div class="t r" style="left:127px;top:880px;width:82px">5.364</div>
<div class="t" style="left:220px;top:880px;width:74px">Waiting</div>
<div class="t" style="left:535px;top:880px;width:60px">0:22:09</div>
<div class="t" style="left:1116px;top:880px;width:130px;letter-spacing:0.09px">w16s24id8606_ID8_00</div>
<div class="t" style="left:1250px;top:880px;width:59px">Yes</div>
<div class="t" style="left:1312px;top:880px;width:60px">0:00:43</div>
<div class="t" style="left:1375px;top:880px;width:60px">0:21:26</div>
<div class="t r" style="left:43px;top:899px;width:33px">30</div>
<div class="t" style="left:87px;top:899px;width:39px">BTC</div>
<div class="t r" style="left:127px;top:899px;width:82px">5.372</div>
<div class="t" style="left:220px;top:899px;width:74px">Running</div>
<div class="t" style="left:535px;top:899px;width:60px">0:20:12</div>
<div class="t r" style="left:596px;top:899px;width:44px">14</div>
<div class="t" style="left:710px;top:899px;width:284px;letter-spacing:0.04px">SAPLSYDB</div>
<div class="t" style="left:997px;top:899px;width:25px">800</div>
<div class="t" style="left:1025px;top:899px;width:88px">DDIC</div>
<div class="t" style="left:1116px;top:899px;width:130px;letter-spacing:0.09px">w16s24id8606_ID8_00</div>
<div class="t" style="left:1250px;top:899px;width:59px">Yes</div>
<div class="t" style="left:1312px;top:899px;width:60px">0:00:29</div>
<div class="t" style="left:1375px;top:899px;width:60px">0:19:43</div>
<div class="t" style="left:1438px;top:899px;width:109px;letter-spacing:-0.27px">Background</div>
<div class="t" style="left:1550px;top:899px;width:150px;letter-spacing:0.45px">/BNWVS/BC_JOB_TASK_RUN</div>
<div class="t r" style="left:43px;top:918px;width:33px">31</div>
<div class="t" style="left:87px;top:918px;width:39px">BTC</div>
<div class="t r" style="left:127px;top:918px;width:82px">5.380</div>
<div class="t" style="left:220px;top:918px;width:74px">Waiting</div>
<div class="t" style="left:535px;top:918px;width:60px">0:20:17</div>
<div class="t" style="left:1116px;top:918px;width:130px;letter-spacing:0.09px">w16s24id8606_ID8_00</div>
<div class="t" style="left:1250px;top:918px;width:59px">Yes</div>
<div class="t" style="left:1312px;top:918px;width:60px">0:00:29</div>
<div class="t" style="left:1375px;top:918px;width:60px">0:19:48</div>
<div class="t r" style="left:43px;top:937px;width:33px">32</div>
<div class="t" style="left:87px;top:937px;width:39px">BTC</div>
<div class="t r" style="left:127px;top:937px;width:82px">5.388</div>
<div class="t" style="left:220px;top:937px;width:74px">Waiting</div>
<div class="t" style="left:535px;top:937px;width:60px">0:17:00</div>
<div class="t" style="left:1116px;top:937px;width:130px;letter-spacing:0.09px">w16s24id8606_ID8_00</div>
<div class="t" style="left:1250px;top:937px;width:59px">Yes</div>
<div class="t" style="left:1312px;top:937px;width:60px">0:00:31</div>
<div class="t" style="left:1375px;top:937px;width:60px">0:16:30</div>
<div class="t r" style="left:43px;top:956px;width:33px">33</div>
<div class="t" style="left:87px;top:956px;width:39px">BTC</div>
<div class="t r" style="left:127px;top:956px;width:82px">5.396</div>
<div class="t" style="left:220px;top:956px;width:74px">Waiting</div>
<div class="t" style="left:535px;top:956px;width:60px">0:22:45</div>
<div class="t" style="left:1116px;top:956px;width:130px;letter-spacing:0.09px">w16s24id8606_ID8_00</div>
<div class="t" style="left:1250px;top:956px;width:59px">Yes</div>
<div class="t" style="left:1312px;top:956px;width:60px">0:00:43</div>
<div class="t" style="left:1375px;top:956px;width:60px">0:22:03</div>
<div class="t r" style="left:43px;top:975px;width:33px">34</div>
<div class="t" style="left:87px;top:975px;width:39px">BTC</div>
<div class="t r" style="left:127px;top:975px;width:82px">5.408</div>
<div class="t" style="left:220px;top:975px;width:74px">Waiting</div>
<div class="t" style="left:535px;top:975px;width:60px">0:25:49</div>
<div class="t" style="left:1116px;top:975px;width:130px;letter-spacing:0.09px">w16s24id8606_ID8_00</div>
<div class="t" style="left:1250px;top:975px;width:59px">Yes</div>
<div class="t" style="left:1312px;top:975px;width:60px">0:00:35</div>
<div class="t" style="left:1375px;top:975px;width:60px">0:25:14</div>
<div class="t r" style="left:43px;top:994px;width:33px">35</div>
<div class="t" style="left:87px;top:994px;width:39px">BTC</div>
<div class="t r" style="left:127px;top:994px;width:82px">5.416</div>
<div class="t" style="left:220px;top:994px;width:74px">Waiting</div>
<div class="t" style="left:535px;top:994px;width:60px">0:22:49</div>
<div class="t" style="left:1116px;top:994px;width:130px;letter-spacing:0.09px">w16s24id8606_ID8_00</div>
<div class="t" style="left:1250px;top:994px;width:59px">Yes</div>
<div class="t" style="left:1312px;top:994px;width:60px">0:00:29</div>
<div class="t" style="left:1375px;top:994px;width:60px">0:22:20</div>
<div class="t r" style="left:43px;top:1013px;width:33px">36</div>
<div class="t" style="left:87px;top:1013px;width:39px">BTC</div>
<div class="t r" style="left:127px;top:1013px;width:82px">5.424</div>
<div class="t" style="left:220px;top:1013px;width:74px">Running</div>
<div class="t" style="left:535px;top:1013px;width:60px">0:23:49</div>
<div class="t r" style="left:596px;top:1013px;width:44px">1</div>
<div class="t" style="left:710px;top:1013px;width:284px;letter-spacing:0.31px">SAPLHTTP_RUNTIME</div>
<div class="t" style="left:997px;top:1013px;width:25px">800</div>
<div class="t" style="left:1025px;top:1013px;width:88px">DDIC</div>
<div class="t" style="left:1116px;top:1013px;width:130px;letter-spacing:0.09px">w16s24id8606_ID8_00</div>
<div class="t" style="left:1250px;top:1013px;width:59px">Yes</div>
<div class="t" style="left:1312px;top:1013px;width:60px">0:00:36</div>
<div class="t" style="left:1375px;top:1013px;width:60px">0:23:13</div>
<div class="t" style="left:1438px;top:1013px;width:109px;letter-spacing:-0.27px">Background</div>
<div class="t" style="left:1550px;top:1013px;width:150px;letter-spacing:0.45px">/BNWVS/BC_JOB_TASK_RUN</div>
<div class="t r" style="left:43px;top:1032px;width:33px">37</div>
<div class="t" style="left:87px;top:1032px;width:39px">BTC</div>
<div class="t r" style="left:127px;top:1032px;width:82px">5.432</div>
<div class="t" style="left:220px;top:1032px;width:74px">Waiting</div>
<div class="t" style="left:535px;top:1032px;width:60px">0:25:45</div>
<div class="t" style="left:1116px;top:1032px;width:130px;letter-spacing:0.09px">w16s24id8606_ID8_00</div>
<div class="t" style="left:1250px;top:1032px;width:59px">Yes</div>
<div class="t" style="left:1312px;top:1032px;width:60px">0:00:31</div>
<div class="t" style="left:1375px;top:1032px;width:60px">0:25:15</div>
<div class="t r" style="left:43px;top:1051px;width:33px">38</div>
<div class="t" style="left:87px;top:1051px;width:39px">BTC</div>
<div class="t r" style="left:127px;top:1051px;width:82px">5.444</div>
<div class="t" style="left:220px;top:1051px;width:74px">Waiting</div>
<div class="t" style="left:535px;top:1051px;width:60px">0:22:29</div>
<div class="t" style="left:1116px;top:1051px;width:130px;letter-spacing:0.09px">w16s24id8606_ID8_00</div>
<div class="t" style="left:1250px;top:1051px;width:59px">Yes</div>
<div class="t" style="left:1312px;top:1051px;width:60px">0:00:35</div>
<div class="t" style="left:1375px;top:1051px;width:60px">0:21:54</div>
<div class="t r" style="left:43px;top:1070px;width:33px">39</div>
<div class="t" style="left:87px;top:1070px;width:39px">BTC</div>
<div class="t r" style="left:127px;top:1070px;width:82px">5.456</div>
<div class="t" style="left:220px;top:1070px;width:74px">Running</div>
<div class="t" style="left:535px;top:1070px;width:60px">0:02:26</div>
<div class="t" style="left:710px;top:1070px;width:284px;letter-spacing:0.27px">/BNWVS/CL_JOB_EXTRACTOR_STD===CP</div>
<div class="t" style="left:997px;top:1070px;width:25px">800</div>
<div class="t" style="left:1025px;top:1070px;width:88px">DDIC</div>
<div class="t" style="left:1116px;top:1070px;width:130px;letter-spacing:0.09px">w16s24id8606_ID8_00</div>
<div class="t" style="left:1250px;top:1070px;width:59px">Yes</div>
<div class="t" style="left:1312px;top:1070px;width:60px">0:00:22</div>
<div class="t" style="left:1375px;top:1070px;width:60px">0:02:04</div>
<div class="t" style="left:1438px;top:1070px;width:109px;letter-spacing:-0.27px">Background</div>
<div class="t" style="left:1550px;top:1070px;width:150px;letter-spacing:0.45px">/BNWVS/BC_DATA_EXTRACTOR</div>
<div class="t r" style="left:43px;top:1089px;width:33px">40</div>
<div class="t" style="left:87px;top:1089px;width:39px">BTC</div>
<div class="t r" style="left:127px;top:1089px;width:82px">5.468</div>
<div class="t" style="left:220px;top:1089px;width:74px">Waiting</div>
<div class="t" style="left:535px;top:1089px;width:60px">0:27:52</div>
<div class="t" style="left:1116px;top:1089px;width:130px;letter-spacing:0.09px">w16s24id8606_ID8_00</div>
<div class="t" style="left:1250px;top:1089px;width:59px">Yes</div>
<div class="t" style="left:1312px;top:1089px;width:60px">0:00:33</div>
<div class="t" style="left:1375px;top:1089px;width:60px">0:27:19</div>
<div class="t r" style="left:43px;top:1108px;width:33px">41</div>
<div class="t" style="left:87px;top:1108px;width:39px">SPO</div>
<div class="t r" style="left:127px;top:1108px;width:82px">5.476</div>
<div class="t" style="left:220px;top:1108px;width:74px">Waiting</div>
<div class="t" style="left:535px;top:1108px;width:60px">0:00:20</div>
<div class="t" style="left:1116px;top:1108px;width:130px;letter-spacing:0.09px">w16s24id8606_ID8_00</div>
<div class="t" style="left:1250px;top:1108px;width:59px">Yes</div>
<div class="t" style="left:1312px;top:1108px;width:60px">0:00:17</div>
<div class="t" style="left:1375px;top:1108px;width:60px">0:00:03</div>
<div class="t r" style="left:43px;top:1127px;width:33px">42</div>
<div class="t" style="left:87px;top:1127px;width:39px">UPD2</div>
<div class="t r" style="left:127px;top:1127px;width:82px">5.484</div>
<div class="t" style="left:220px;top:1127px;width:74px">Waiting</div>
<div class="t" style="left:535px;top:1127px;width:60px">0:00:28</div>
<div class="t" style="left:1116px;top:1127px;width:130px;letter-spacing:0.09px">w16s24id8606_ID8_00</div>
<div class="t" style="left:1250px;top:1127px;width:59px">Yes</div>
<div class="t" style="left:1312px;top:1127px;width:60px">0:00:17</div>
<div class="t" style="left:1375px;top:1127px;width:60px">0:00:10</div>
<div class="a" style="left:20px;top:462px;width:23px;height:19px;background:#bfc5cf"></div>
<svg class="ic" style="left:20px;top:462px" width="23" height="19" viewBox="0 0 23 19"><path d="M0.500 7V0.500H6M17 0.500H22.500V7M22.500 12V18.500H17M6 18.500H0.500V12" fill="none" stroke="#e8101c" stroke-width="1"/><path d="M7 0.500H16" stroke="#3a3a8a" stroke-width="1" stroke-dasharray="1 1"/><path d="M0.500 8V12M22.500 8V12" stroke="#3a3a8a" stroke-width="1" stroke-dasharray="1 1"/></svg>
<svg class="ic" style="left:0;top:0" width="1741" height="1209" viewBox="0 0 1741 1209"><defs><filter id="sh" x="-20%" y="-20%" width="140%" height="140%"><feGaussianBlur in="SourceAlpha" stdDeviation="2.2"/><feOffset dx="-1.500" dy="3"/><feComponentTransfer><feFuncA type="linear" slope="0.550"/></feComponentTransfer><feMerge><feMergeNode/><feMergeNode in="SourceGraphic"/></feMerge></filter><filter id="sh2" x="-30%" y="-30%" width="160%" height="160%"><feGaussianBlur in="SourceAlpha" stdDeviation="1.600"/><feOffset dx="0" dy="2"/><feComponentTransfer><feFuncA type="linear" slope="0.450"/></feComponentTransfer><feMerge><feMergeNode/><feMergeNode in="SourceGraphic"/></feMerge></filter></defs><g filter="url(#sh)" fill="#d41235"><path d="M64.800 149.300L98 154L90.200 165.200L217.700 249.200A5.200 5.200 0 0 1 211.700 257.800L86.700 170.200L80 178Z"/><path d="M50.700 456.500L71.400 431.700L74.600 442.300L179.300 388.300A5.200 5.200 0 0 1 183.900 397.700L77.300 447.500L83 457Z"/></g></svg>
<div class="dg" style="left:253px;top:269px">2</div><div class="dg" style="left:228.5px;top:371px">1</div>
</body></html>
